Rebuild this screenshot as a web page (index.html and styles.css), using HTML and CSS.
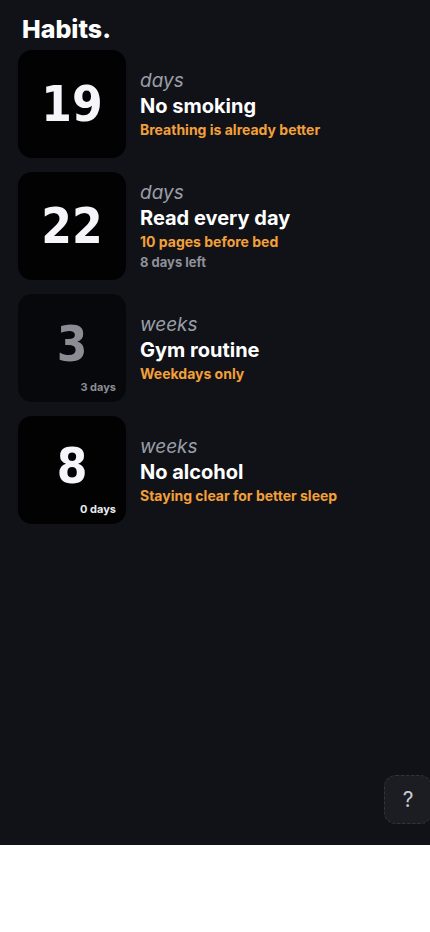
FILE: index.html
```html
<!DOCTYPE html>
<html lang="en">
<head>
    <meta charset="UTF-8">
    <meta name="viewport" content="width=device-width, initial-scale=1.0">
    <title>Habits.</title>
    <link rel="stylesheet" href="styles.css">
</head>
<body>
    <div class="app">
        <h1 class="page-title">Habits.</h1>

        <div class="habit-list">
            <div class="habit">
                <div class="counter">
                    <span class="counter-value">19</span>
                </div>
                <div class="habit-info">
                    <div class="unit">days</div>
                    <div class="habit-name">No smoking</div>
                    <div class="habit-note">Breathing is already better</div>
                </div>
            </div>

            <div class="habit">
                <div class="counter">
                    <span class="counter-value">22</span>
                </div>
                <div class="habit-info">
                    <div class="unit">days</div>
                    <div class="habit-name">Read every day</div>
                    <div class="habit-note">10 pages before bed</div>
                    <div class="habit-extra">8 days left</div>
                </div>
            </div>

            <div class="habit">
                <div class="counter counter-muted has-label">
                    <span class="counter-value">3</span>
                    <span class="counter-label">3 days</span>
                </div>
                <div class="habit-info">
                    <div class="unit">weeks</div>
                    <div class="habit-name">Gym routine</div>
                    <div class="habit-note">Weekdays only</div>
                </div>
            </div>

            <div class="habit">
                <div class="counter has-label">
                    <span class="counter-value">8</span>
                    <span class="counter-label">0 days</span>
                </div>
                <div class="habit-info">
                    <div class="unit">weeks</div>
                    <div class="habit-name">No alcohol</div>
                    <div class="habit-note">Staying clear for better sleep</div>
                </div>
            </div>
        </div>

        <button class="help-button">?</button>
    </div>
</body>
</html>
```

FILE: styles.css
```css
body {
    margin: 0;
    background-color: #ffffff;
    font-family: Inter, "Noto Sans", sans-serif;
}
.app {
    position: relative;
    height: 845px;
    background-color: #111217;
    padding: 14px 18px 0;
    box-sizing: border-box;
    overflow: hidden;
}
.page-title {
    margin: 0 0 0 4px;
    font-size: 25px;
    font-weight: 800;
    line-height: 30px;
    color: #ffffff;
}
.habit-list {
    display: flex;
    flex-direction: column;
    gap: 14px;
    margin-top: 6px;
}
.habit {
    display: flex;
    align-items: center;
    gap: 14px;
}
.counter {
    position: relative;
    flex-shrink: 0;
    width: 108px;
    height: 108px;
    border-radius: 14px;
    background-color: #020203;
    display: flex;
    align-items: center;
    justify-content: center;
}
.counter-value {
    font-family: "DejaVu Sans Condensed", "DejaVu Sans", sans-serif;
    font-stretch: condensed;
    font-weight: 700;
    font-size: 49px;
    line-height: 1;
    color: #f6f6fa;
}
.has-label .counter-value {
    margin-bottom: 8px;
}
.counter-muted {
    background-color: #07080b;
}
.counter-muted .counter-value {
    color: #8a8d94;
}
.counter-label {
    position: absolute;
    right: 10px;
    bottom: 8px;
    font-size: 11px;
    font-weight: 700;
    color: #e8e9ee;
}
.counter-muted .counter-label {
    color: #8a8d94;
}
.habit-info {
    display: flex;
    flex-direction: column;
}
.unit {
    font-size: 19px;
    font-style: italic;
    line-height: 25px;
    color: #9a9ea8;
}
.habit-name {
    font-size: 20px;
    font-weight: 700;
    line-height: 26px;
    color: #ffffff;
}
.habit-note {
    font-size: 14px;
    font-weight: 700;
    line-height: 21px;
    color: #f3a03a;
}
.habit-extra {
    font-size: 13px;
    font-weight: 700;
    line-height: 20px;
    color: #8e9199;
}
.help-button {
    position: absolute;
    right: -2px;
    bottom: 21px;
    width: 48px;
    height: 49px;
    border: 1px dashed #34353b;
    border-radius: 12px;
    background-color: #1c1d22;
    color: #c9cbd2;
    font-family: Inter, sans-serif;
    font-size: 21px;
    cursor: pointer;
}
```
